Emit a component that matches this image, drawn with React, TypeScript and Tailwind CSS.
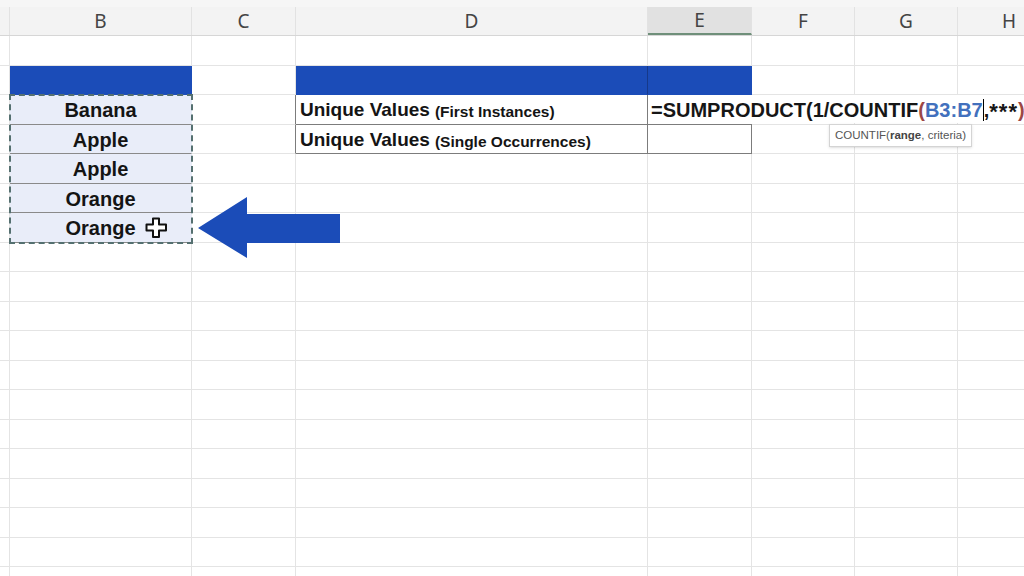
import React from 'react';

const BLUE = 'bg-[#1b4cb8]';

const COLS = [
  { key: 'A', w: 'w-[10px]' },
  { key: 'B', w: 'w-[182px]' },
  { key: 'C', w: 'w-[104px]' },
  { key: 'D', w: 'w-[352px]' },
  { key: 'E', w: 'w-[104px]' },
  { key: 'F', w: 'w-[103px]' },
  { key: 'G', w: 'w-[103px]' },
  { key: 'H', w: 'w-[103px]' },
];

const FRUITS: Record<number, string> = {
  3: 'Banana',
  4: 'Apple',
  5: 'Apple',
  6: 'Orange',
  7: 'Orange',
};

const ROWS = Array.from({ length: 19 }, (_, i) => i + 1);

function cellClass(row: number, col: string) {
  // default gridline look
  let cls = 'border-r border-b border-r-[#e4e4e4] border-b-[#e4e4e4] bg-white';

  if (row === 2 && col === 'B') cls = `${BLUE} border-r border-b border-r-[#1b4cb8] border-b-[#1b4cb8]`;
  if (row === 2 && col === 'D') cls = `${BLUE} border-r border-b border-r-[#16398a] border-b-[#1b4cb8]`;
  if (row === 2 && col === 'E') cls = `${BLUE} border-r border-b border-r-[#1b4cb8] border-b-[#1b4cb8]`;

  if (FRUITS[row] && col === 'B') cls = 'bg-[#e9edf9] border-r border-b border-r-[#e9edf9] border-b-[#8a8a8a]';

  if ((row === 3 || row === 4) && col === 'C') cls = 'bg-white border-r border-b border-r-[#7c7c7c] border-b-[#e4e4e4]';
  if ((row === 3 || row === 4) && col === 'D') cls = 'bg-white border-r border-b border-r-[#7c7c7c] border-b-[#7c7c7c]';
  if (row === 3 && col === 'E') cls = 'bg-white border-b border-b-[#7c7c7c] relative z-10 overflow-visible';
  if (row === 4 && col === 'E') cls = 'bg-white border-r border-b border-r-[#7c7c7c] border-b-[#7c7c7c]';

  return cls;
}

function Formula() {
  return (
    <div className="absolute left-0 top-0 h-[28px] pl-[3px] pr-2 pt-[2px] bg-white flex items-center whitespace-nowrap text-[20px] font-bold text-[#161616] font-['Liberation_Sans',Arial,sans-serif]">
      <span>=SUMPRODUCT(1/COUNTIF</span>
      <span className="text-[#9c4744]">(</span>
      <span className="text-[#4270bd]">B3:B7</span>
      <span className="inline-block w-px h-[22px] bg-black"></span>
      <span>,</span>
      <span className="text-[22px] tracking-[1px] mt-[2px]">***</span>
      <span className="text-[#9c4744]">)</span>
    </div>
  );
}

function CellContent({ row, col }: { row: number; col: string }) {
  if (FRUITS[row] && col === 'B') {
    return (
      <div className="h-full flex items-center justify-center pt-[2px] text-[20px] font-bold text-[#141414] font-['Liberation_Sans',Arial,sans-serif]">
        {FRUITS[row]}
      </div>
    );
  }
  if ((row === 3 || row === 4) && col === 'D') {
    return (
      <div className="h-full flex items-center pl-[4px] pt-[2px] whitespace-nowrap text-[#141414] font-bold font-['Liberation_Sans',Arial,sans-serif]">
        <span className="text-[19px]">Unique Values</span>
        <span className="text-[15.5px] ml-[5px] mt-[3px]">{row === 3 ? '(First Instances)' : '(Single Occurrences)'}</span>
      </div>
    );
  }
  if (row === 3 && col === 'E') return <Formula />;
  return null;
}

export default function App() {
  return (
    <div className="relative w-[1024px] h-[576px] overflow-hidden bg-white font-['Noto_Sans',sans-serif]">
      {/* strip above the column headers */}
      <div className="h-[7px] bg-[#f6f6f6]"></div>

      {/* column headers */}
      <div className="flex h-[29px] bg-[#f3f3f3] border-b border-[#d6d6d6]">
        {COLS.map((c) => (
          <div
            key={c.key}
            className={`${c.w} shrink-0 flex items-center justify-center text-[19px] text-[#444] border-r border-[#e2e2e2] ${
              c.key === 'E' ? 'bg-[#e1e1e1] border-b-2 border-b-[#6f8f7a] text-[#333]' : ''
            }`}
          >
            {c.key === 'A' ? '' : c.key}
          </div>
        ))}
      </div>

      {/* rows */}
      {ROWS.map((r) => (
        <div key={r} className="flex h-[29.5px]">
          {COLS.map((c) => (
            <div key={c.key} className={`${c.w} shrink-0 ${cellClass(r, c.key)}`}>
              <CellContent row={r} col={c.key} />
            </div>
          ))}
        </div>
      ))}

      {/* copy range marquee around B3:B7 */}
      <div className="absolute left-[9px] top-[94px] w-[184px] h-[150px] border-2 border-dashed border-[#557070] pointer-events-none"></div>

      {/* function tooltip */}
      <div className="absolute left-[829px] top-[124px] z-20 px-[5px] py-[2px] bg-white border border-[#d4d4d4] shadow-sm text-[11.5px] text-[#555] font-['Liberation_Sans',Arial,sans-serif]">
        COUNTIF(<span className="font-bold text-[#444]">range</span>, criteria)
      </div>

      {/* pointer arrow */}
      <svg className="absolute left-0 top-0 pointer-events-none" width="1024" height="576">
        <polygon points="198,228 247,197 247,214 340,214 340,243 247,243 247,258" fill="#1b4cb8" />
      </svg>

      {/* mouse cursor (fat cross) */}
      <svg className="absolute left-[145px] top-[217px]" width="23" height="22" viewBox="0 0 23 22">
        <path
          d="M8 1.5 H14 V7.5 H21 V13.5 H14 V20 H8 V13.5 H1.5 V7.5 H8 Z"
          fill="#fff"
          stroke="#111"
          strokeWidth="2"
          strokeLinejoin="round"
        />
      </svg>
    </div>
  );
}
